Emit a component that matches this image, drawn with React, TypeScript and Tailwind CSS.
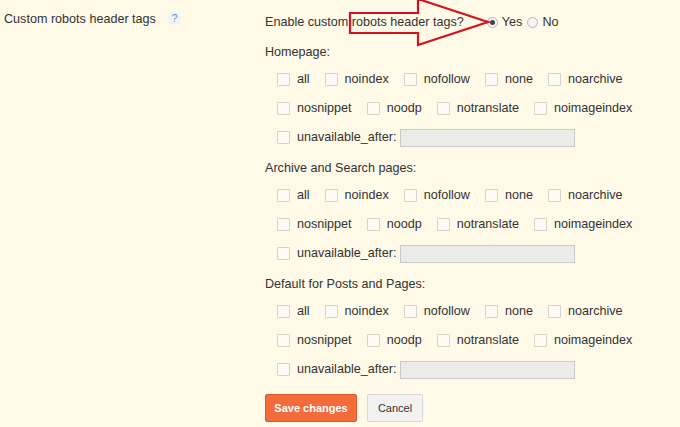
import React from 'react'

const rows = [
  ['all', 'noindex', 'nofollow', 'none', 'noarchive'],
  ['nosnippet', 'noodp', 'notranslate', 'noimageindex'],
]

const sections = ['Homepage:', 'Archive and Search pages:', 'Default for Posts and Pages:']

function Box() {
  return <span className="inline-block w-[13px] h-[13px] border border-[#d6d3c9] bg-[#fdfbf3] rounded-[1px] shrink-0" />
}

function Radio({ checked }: { checked?: boolean }) {
  return (
    <span className="inline-flex items-center justify-center w-[11px] h-[11px] rounded-full border border-[#b9b9b9] bg-[#f4f4f4] shrink-0">
      {checked && <span className="w-[5px] h-[5px] rounded-full bg-[#444]" />}
    </span>
  )
}

function Section({ title }: { title: string }) {
  return (
    <div className="mb-[3px]">
      <div className="h-[26px] flex items-center">{title}</div>
      <div className="pl-[12px]">
        {rows.map((row, i) => (
          <div key={i} className="h-[29px] flex items-center">
            {row.map((label) => (
              <label key={label} className="flex items-center gap-[7px] mr-[15px]">
                <Box />
                <span>{label}</span>
              </label>
            ))}
          </div>
        ))}
        <div className="h-[29px] flex items-center">
          <label className="flex items-center gap-[7px]">
            <Box />
            <span>unavailable_after:</span>
          </label>
          <span className="ml-[4px] w-[175px] h-[18px] border border-[#c9c9c9] bg-[#ebebe8]" />
        </div>
      </div>
    </div>
  )
}

export default function App() {
  return (
    <div
      className="relative w-[680px] h-[427px] overflow-hidden bg-[#fff9e8] text-[#333] text-[12.6px] leading-none"
      style={{ fontFamily: '"Liberation Sans", Arial, sans-serif' }}
    >
      <div className="flex">
        {/* left label column */}
        <div className="w-[265px] shrink-0 pl-[4px] pt-[13px] flex items-start">
          <span>Custom robots header tags</span>
          <span className="ml-[12px] mt-[-1px] w-[13px] h-[13px] rounded-full bg-[#eef3f6] text-[#5c8fc4] text-[10px] flex items-center justify-center">
            ?
          </span>
        </div>

        {/* settings column */}
        <div className="flex-1 pt-[7px]">
          <div className="h-[30px] flex items-center mb-[2px]">
            <span>Enable custom robots header tags?</span>
            <span className="ml-[23px] flex items-center gap-[4px]">
              <Radio checked />
              <span>Yes</span>
            </span>
            <span className="ml-[5px] flex items-center gap-[4px]">
              <Radio />
              <span>No</span>
            </span>
          </div>

          {sections.map((s) => (
            <Section key={s} title={s} />
          ))}

          <div className="flex gap-[10px] mt-[10px]">
            <button className="h-[28px] w-[92px] rounded-[2px] bg-[#f46c3c] border border-[#de5a2c] text-white text-[11px] font-bold">
              Save changes
            </button>
            <button className="h-[28px] w-[56px] rounded-[2px] bg-[#f2f2f0] border border-[#d8d8d6] text-[#333] text-[11px]">
              Cancel
            </button>
          </div>
        </div>
      </div>

      {/* red annotation arrow */}
      <svg className="absolute left-0 top-0 pointer-events-none" width="680" height="60" viewBox="0 0 680 60">
        <path
          d="M350 13 L418 13 L418 -1 L488 22 L418 45 L418 33 L350 33 Z"
          fill="none"
          stroke="#d2141e"
          strokeWidth="2.2"
          strokeLinejoin="miter"
        />
      </svg>
    </div>
  )
}
